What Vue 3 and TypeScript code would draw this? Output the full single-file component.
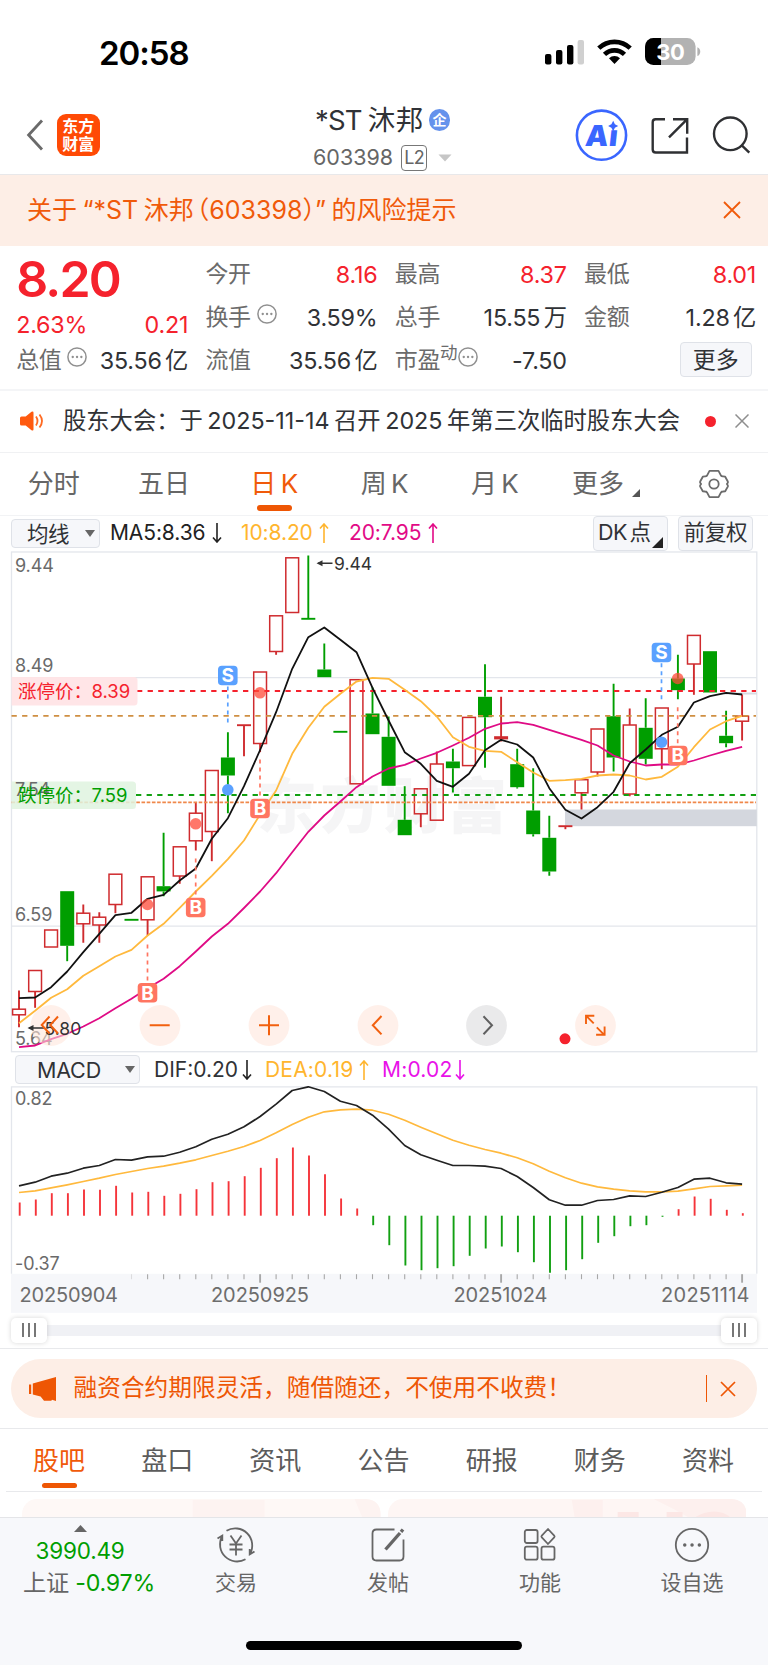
<script setup lang="ts">
type Candle = [high: number, top: number, bottom: number, low: number, up: 0 | 1]

const X0 = 19
const STEP = 16.07
const xAt = (i: number): number => +(X0 + STEP * i).toFixed(1)

const candles: Candle[] = [
  [990, 1008.7, 1014.3, 1026.7, 1], [970, 970, 991, 1007.3, 1], [929.5, 929.5, 946.5, 946.5, 1],
  [890.7, 890.7, 945.3, 960.7, 0], [904, 912.7, 923.3, 942.3, 1], [911.7, 916.7, 924.5, 942.3, 1],
  [873.7, 873.7, 904, 912.7, 1], [918.6, 918.6, 920, 920, 0], [876.3, 876.3, 919.3, 935, 1],
  [832.3, 885.7, 890.9, 895.7, 0], [846.3, 846.3, 875.5, 883.3, 1], [802, 812.7, 840.3, 850, 1],
  [770, 770, 831, 860.7, 1], [731.7, 757, 775, 812.7, 0], [724.7, 724.7, 724.7, 755.7, 1],
  [671.5, 671.5, 743, 751.7, 1], [615.3, 615.3, 651, 654.3, 1], [557.3, 557.3, 612, 612, 1],
  [555, 617.6, 619, 619, 0], [643, 669, 676.7, 676.7, 0], [730.6, 730.6, 732, 732, 0],
  [679.2, 679.2, 783.3, 783.3, 1], [686.7, 713, 733.7, 733.7, 0], [716, 736.3, 785.3, 785.3, 0],
  [785.7, 819.3, 834.7, 834.7, 0], [788.3, 788.3, 813.3, 826.7, 1], [751, 763.5, 819.7, 819.7, 1],
  [748.3, 761, 767.7, 792, 0], [716.9, 716.9, 765.1, 765.1, 1], [663.7, 696.3, 716.7, 767.3, 0],
  [696.3, 736.5, 738.1, 741, 1], [748.3, 763.7, 786.7, 788, 0], [767.7, 810, 833.7, 836, 0],
  [815.3, 837.3, 871, 875.3, 0], [825.7, 825.7, 825.7, 828.7, 1], [779.2, 779.2, 792.3, 809, 1],
  [728.5, 728.5, 771.5, 776, 1], [683.3, 715.7, 757, 771, 0], [708, 724.5, 793.5, 795.7, 1],
  [697.7, 727.3, 758.3, 764, 0], [707.5, 707.5, 748.3, 768.7, 1], [654.3, 678, 689.7, 698.7, 0],
  [634.9, 634.9, 663.5, 694.3, 1], [650.7, 650.7, 692, 692, 0], [710.3, 735.3, 742.7, 746.7, 0],
  [694, 715.7, 720.7, 740, 1],
]

const ma5 = [997.7, 997, 986.7, 971, 951.7, 933.3, 914.7, 912.3, 898.3, 894.3, 880, 868, 838.3, 817.7, 785.7, 749.5, 711.7, 668.3, 636.7, 627, 639.3, 651.7, 687.3, 720, 751.7, 763.3, 780.3, 786.3, 773.3, 749.7, 739.3, 744, 757, 787.7, 809.3, 818, 806.7, 791.3, 762.7, 749, 734.3, 726.3, 702, 695.7, 692.3, 694]
const ma10 = [1022.7, 1010.3, 997.3, 988.7, 975.3, 965.7, 956, 949.3, 935, 923.3, 907.3, 891, 875.3, 858.7, 840, 814, 790, 753.3, 727.3, 706.3, 693.3, 681, 677.3, 678.3, 689.3, 700.7, 716, 736.7, 746.3, 750.3, 751.3, 761.7, 772, 780.3, 779.7, 778.3, 775, 774, 775, 779, 776.3, 766.3, 746.7, 729, 720.7, 715.3]
const ma20 = [1046.7, 1045, 1038.7, 1033.3, 1026, 1017.7, 1007.7, 998.3, 987.7, 978.3, 965.7, 951, 936, 923.3, 907.5, 891, 872.7, 851.7, 831.3, 815, 801, 786.7, 776, 768, 764.3, 758, 752.3, 745, 737.3, 728.3, 723, 721.7, 724.3, 729.3, 734.3, 739.3, 745, 755, 761, 765, 764, 764, 760, 755, 750.3, 746.3]

const sub = (v: number): number => +(1050 + v / 3).toFixed(1)
const dif = [406, 395, 377, 368, 353, 345, 327, 329, 319, 317, 305, 289, 266, 251, 229, 198, 161, 120, 109, 123, 152, 165, 194, 236, 285, 313, 329, 345, 345, 347, 354, 378, 411, 448, 464, 464, 450, 447, 436, 438, 425, 411, 386, 383, 397, 401].map(sub)
const dea = [426, 421, 412, 403, 393, 383, 372, 363, 354, 347, 338, 328, 315, 302, 288, 270, 247, 222, 200, 184, 178, 176, 179, 191, 209, 230, 250, 269, 284, 297, 308, 322, 340, 362, 382, 398, 409, 416, 421, 424, 424, 422, 415, 408, 406, 404].map(sub)
const bars = [456, 447, 428, 428, 417, 418, 406, 426, 424, 436, 430, 416, 395, 392, 377, 352, 323, 291, 315, 371, 444, 474, 524, 584, 645, 659, 653, 647, 616, 594, 588, 605, 635, 667, 659, 626, 577, 557, 527, 524, 499, 476, 438, 445, 478, 488].map(sub)
const ZERO = 1215.2

const line = (ys: number[]): string => ys.map((y, i) => `${xAt(i)},${y}`).join(' ')
const ticks = Array.from({ length: 38 }, (_, k) => k + 8)

interface Signal { kind: 'B' | 'S'; x: number; y: number; from: number; to: number; dot: number }
const signals: Signal[] = [
  { kind: 'S', x: 227.8, y: 675, from: 686, to: 724, dot: 789.3 },
  { kind: 'B', x: 147.5, y: 992.3, from: 944, to: 982, dot: 904 },
  { kind: 'B', x: 195.7, y: 907, from: 858, to: 896, dot: 823.3 },
  { kind: 'B', x: 260, y: 808, from: 759, to: 798, dot: 692.3 },
  { kind: 'S', x: 661.5, y: 652, from: 662.7, to: 701, dot: 741.7 },
  { kind: 'B', x: 677.7, y: 755, from: 706.7, to: 744, dot: 678 },
]
const tone = (k: 'B' | 'S'): string => (k === 'S' ? '#5aa1ff' : '#ff7561')

const periods = ['分时', '五日', '日 K', '周 K', '月 K']
const sections = ['股吧', '盘口', '资讯', '公告', '研报', '财务', '资料']
</script>

<template>
  <div class="page">
    <header class="status">
      <span class="clock">20:58</span>
      <svg class="status-icons" width="160" height="30" viewBox="543 37 160 30">
        <rect x="545" y="54" width="6.4" height="10.4" rx="2" />
        <rect x="556" y="50" width="6.4" height="14.4" rx="2" />
        <rect x="567" y="45" width="6.4" height="19.4" rx="2" />
        <rect x="577.6" y="40" width="6.4" height="24.4" rx="2" fill="#d0d0d0" />
        <g fill="none" stroke="#000" stroke-width="4.6">
          <path d="M598.8 48.2a22.6 22.6 0 0 1 31.4 0" />
          <path d="M604.5 54.4a14.4 14.4 0 0 1 20 0" />
        </g>
        <path d="M609 58.3a8 8 0 0 1 11 0l-5.5 5.7z" />
        <clipPath id="cell"><rect x="645" y="38" width="50.6" height="27" rx="8.5" /></clipPath>
        <g clip-path="url(#cell)">
          <rect x="645" y="38" width="51" height="27" fill="#b2b2b2" />
          <rect x="645" y="38" width="16" height="27" />
        </g>
        <path d="M697.4 47.3c3.800 1.200 3.800 7.600 0 8.800z" fill="#b2b2b2" />
        <text x="670.3" y="60" class="battery" text-anchor="middle">30</text>
      </svg>
    </header>

    <nav class="header">
      <svg class="back" width="20" height="34" viewBox="0 0 20 34"><path d="M17 2.500 3.600 17 17 31.500" fill="none" stroke="#6a6a6a" stroke-width="2.800" /></svg>
      <div class="logo"><span>东方</span><span>财富</span></div>
      <div class="title">
        <div class="name">*ST <span>沐邦</span><i>企</i></div>
        <div class="code">603398<b>L2</b><svg width="14" height="8" viewBox="0 0 14 8"><path d="M.5.500h13L7 7.500z" fill="#c6c6c6" /></svg></div>
      </div>
      <svg class="tools" width="178" height="56" viewBox="574 107 178 56" fill="none">
        <circle cx="601.500" cy="135.200" r="24.600" stroke="#3a66ff" stroke-width="2.600" />
        <g class="ai" fill="#3a66ff" transform="translate(16 0) skewX(-6)">
          <text x="583.800" y="145.600">A</text><text x="607.500" y="145.600">ı</text>
        </g>
        <path d="m613.200 120.800 1.700 3.400 3.300 1.700-3.300 1.800-1.700 3.500-1.800-3.500-3.300-1.800 3.300-1.700z" fill="#3a66ff" />
        <g stroke="#2f3033" stroke-width="2.400">
          <path d="M665 119.200h-9.300q-3 0-3 3v27.300q0 3 3 3h31.300v-15M673 119.200h14.200v14.500M687 119.400l-18 18" />
          <circle cx="730.300" cy="133.800" r="16.300" />
          <path d="m741.500 145.200 7.800 7.500" />
        </g>
      </svg>
    </nav>

    <section class="risk">
      <span>关于 “*ST 沐邦<em>（</em>603398<em>）</em>” 的风险提示</span>
      <svg width="18" height="18" viewBox="0 0 18 18"><path d="m1 1 16 16M17 1 1 17" stroke="#f05a0a" stroke-width="1.800" /></svg>
    </section>

    <section class="quote">
      <div class="col first">
        <div class="price">8.20</div>
        <div class="row red chg"><span>2.63%</span><span>0.21</span></div>
        <div class="row"><span class="lab">总值<svg class="info" viewBox="0 0 20 20"><circle cx="10" cy="10" r="9.100" /><path d="M5.700 10h.1M10 10h.1M14.300 10h.1" /></svg></span><span>35.56 亿</span></div>
      </div>
      <div class="col">
        <div class="row"><span class="lab">今开</span><span class="red">8.16</span></div>
        <div class="row"><span class="lab">换手<svg class="info" viewBox="0 0 20 20"><circle cx="10" cy="10" r="9.100" /><path d="M5.700 10h.1M10 10h.1M14.300 10h.1" /></svg></span><span>3.59%</span></div>
        <div class="row"><span class="lab">流值</span><span>35.56 亿</span></div>
      </div>
      <div class="col">
        <div class="row"><span class="lab">最高</span><span class="red">8.37</span></div>
        <div class="row"><span class="lab">总手</span><span>15.55 万</span></div>
        <div class="row"><span class="lab">市盈<sup>动</sup><svg class="info tight" viewBox="0 0 20 20"><circle cx="10" cy="10" r="9.100" /><path d="M5.700 10h.1M10 10h.1M14.300 10h.1" /></svg></span><span>-7.50</span></div>
      </div>
      <div class="col">
        <div class="row"><span class="lab">最低</span><span class="red">8.01</span></div>
        <div class="row"><span class="lab">金额</span><span>1.28 亿</span></div>
        <div class="row end"><button class="more">更多</button></div>
      </div>
    </section>

    <section class="notice">
      <svg width="24" height="20" viewBox="0 0 24 20"><path d="M1.500 5.500h4.200L11.500.800q2-1 2 1v16.400q0 2-2 1l-5.800-4.700H1.500q-1.500 0-1.500-1.500V7q0-1.500 1.500-1.500z" fill="#ff5a0f" /><path d="M16 5.500q3 4.500 0 9M19.500 3.500q5 6.500 0 13" fill="none" stroke="#ff6a22" stroke-width="1.800" /></svg>
      <span class="msg">股东大会：<i>于 2025-11-14 召开 2025 年第三次临时股东大会</i></span>
      <span class="dot"></span>
      <svg class="x" width="14" height="14" viewBox="0 0 14 14"><path d="m.500.500 13 13M13.500.500l-13 13" stroke="#8e8e8e" stroke-width="1.500" /></svg>
    </section>

    <nav class="periods">
      <span v-for="(p, i) in periods" :key="p" :class="{ on: i === 2 }">{{ p }}</span>
      <span class="wide">更多<svg width="8" height="8" viewBox="0 0 8 8"><path d="M8 0v8H0z" fill="#555" /></svg></span>
      <svg class="gear" width="30" height="30" viewBox="0 0 30 30" fill="none" stroke="#6b6b6b" stroke-width="1.800"><path d="M10.500 1.800h9l2.500 4.800q.7.900 2 .8l2.200.3 2.600 4.800q.3.900-.2 1.600l-.7 1 .7 1q.5.700.2 1.500l-2.600 4.700-2.300.2q-1.300 0-1.900.9l-2.500 4.800h-9L8 23.400q-.6-.9-1.900-.9l-2.300-.200-2.600-4.700q-.3-.8.2-1.500l.7-1-.7-1q-.5-.7-.2-1.600l2.600-4.800L6 7.400q1.300.1 2-.8z" stroke-linejoin="round" /><circle cx="15" cy="15" r="4.700" /></svg>
    </nav>

    <section class="ma-row">
      <button class="pick">均线<i></i></button>
      <span class="v v1">MA5:8.36</span><svg class="arr" viewBox="0 0 10 20" stroke="#222"><path d="M5 0v19M1 14.500l4 4.500 4-4.500" /></svg>
      <span class="v v2">10:8.20</span><svg class="arr" viewBox="0 0 10 20" stroke="#ffb52e"><path d="M5 20V1M1 5.500 5 1l4 4.500" /></svg>
      <span class="v v3">20:7.95</span><svg class="arr" viewBox="0 0 10 20" stroke="#e20a86"><path d="M5 20V1M1 5.500 5 1l4 4.500" /></svg>
      <button class="chip dk">DK 点<svg width="11" height="11" viewBox="0 0 11 11"><path d="M11 0v11H0z" fill="#222" /></svg></button>
      <button class="chip">前复权</button>
    </section>

    <svg class="chart" width="768" height="502" viewBox="0 550.500 768 502">
      <text class="watermark" x="257" y="827" textLength="250">东方财富</text>
      <g fill="none" stroke="#e3e6ec" stroke-width="1.300">
        <path d="M11.500 677.200H757M11.500 925.700H757" />
        <rect x="11.500" y="551.500" width="745.300" height="499.700" />
      </g>
      <path d="M724 693H757" stroke="#d9dbe2" stroke-width="2" />
      <rect x="565" y="809" width="191.800" height="16.700" fill="#d4d7de" />
      <g class="axis">
        <text x="15" y="571.200">9.44</text><text x="15" y="671.500">8.49</text><text x="15" y="920.700">6.59</text><text x="15" y="1044.500">5.64</text>
      </g>

      <g v-for="(c, i) in candles" :key="i" :stroke="c[4] ? '#cf2b2e' : '#009e00'" stroke-width="1.900">
        <path :d="`M${xAt(i)} ${c[0]}V${c[1]}M${xAt(i)} ${c[2]}V${c[3]}`" />
        <path v-if="c[2] - c[1] < 2" :d="`M${xAt(i) - 7} ${(c[1] + c[2]) / 2}h14`" :stroke-width="c[2] - c[1] > 1.5 ? 3.2 : 1.9" />
        <rect v-else-if="c[4]" :x="xAt(i) - 6.4" :y="c[1]" width="12.800" :height="c[2] - c[1]" fill="none" stroke-width="1.500" />
        <rect v-else :x="xAt(i) - 7" :y="c[1]" width="14" :height="c[2] - c[1]" fill="#009e00" stroke="none" />
      </g>

      <g fill="none" stroke-width="1.800">
        <path d="M137 690.500H756" stroke="#f5222d" stroke-dasharray="5.300 5.300" />
        <path d="M11.500 715.400H756" stroke="#cf8f42" stroke-dasharray="5.300 5.300" />
        <path d="M136 794.500H756" stroke="#12a012" stroke-dasharray="5.300 5.300" />
        <path d="M11.500 801.800H756" stroke="#f0884a" stroke-dasharray="3.600 1.600" />
      </g>
      <path d="M11.500 676.500h122.500q3.500 0 3.500 3.500v21.500q0 3.500-3.500 3.500H11.500z" fill="#ffe4e6" fill-opacity=".95" />
      <text class="limit" x="18" y="697.500" fill="#f5222d">涨停价：<tspan x="91.500">8.39</tspan></text>
      <path d="M11.500 781h121q3.500 0 3.500 3.500v20.500q0 3.500-3.500 3.500h-121z" fill="#dff3df" fill-opacity=".85" />
      <g class="axis"><text x="15" y="795.800">7.54</text></g>
      <text class="limit" x="18" y="801.500" fill="#009e00">跌停价：<tspan x="91.500">7.59</tspan></text>

      <g fill="none" stroke-width="1.800" stroke-linejoin="round">
        <polyline :points="line(ma20)" stroke="#df0b85" />
        <polyline :points="line(ma10)" stroke="#ffb93d" />
        <polyline :points="line(ma5)" stroke="#111" />
      </g>

      <g v-for="s in signals" :key="s.x">
        <path :d="`M${s.x} ${s.from}V${s.to}`" :stroke="tone(s.kind)" stroke-width="1.700" stroke-dasharray="4 4" />
        <circle :cx="s.x" :cy="s.dot" r="5.800" :fill="s.kind === 'S' ? '#5aa1ff' : '#ff4a38'" :fill-opacity="s.kind === 'S' ? 1 : 0.75" />
        <rect :x="s.x - 9.8" :y="s.y - 9.8" width="19.600" height="19.600" rx="3.800" :fill="tone(s.kind)" />
        <text class="tag" :x="s.x" :y="s.y + 6.8" text-anchor="middle">{{ s.kind }}</text>
      </g>

      <g fill="#ffe6da" fill-opacity=".58">
        <circle cx="51" cy="1025" r="20.400" /><circle cx="160" cy="1025" r="20.400" /><circle cx="269" cy="1025" r="20.400" /><circle cx="378" cy="1025" r="20.400" /><circle cx="595.500" cy="1025" r="20.400" />
        <circle cx="486.500" cy="1025" r="20.400" fill="#e8e8e9" fill-opacity=".9" />
      </g>
      <g class="mark">
        <path d="M318 562.700h14.500M29 1027.500h16" stroke="#333" stroke-width="1.500" />
        <path d="M316.500 562.700l6-3v6zM27.500 1027.500l6-3v6z" />
        <text x="334" y="569">9.44</text><text x="44.500" y="1034.200">5.80</text>
      </g>
      <g fill="none" stroke="#f2600f" stroke-width="2">
        <path d="m49.500 1016-7.800 8.500 7.800 8.500M58 1016l-7.800 8.500 7.800 8.500" />
        <path d="M149.700 1024.700h20M259 1024.700h20M269 1014.700v20M381.500 1015.500l-8.700 9.200 8.700 9.200" />
        <path d="M586 1023.500v-8.300h8.300M586.200 1015.400l7.500 7.500M596.800 1026.800l7.500 7.500M604.600 1026v8.300h-8.500" stroke-width="1.900" />
        <path d="m483.500 1015.800 8.500 9-8.500 9" stroke="#606060" />
      </g>
      <circle cx="565" cy="1038.300" r="5.500" fill="#f5222d" />
    </svg>

    <section class="ma-row macd">
      <button class="pick">MACD<i></i></button>
      <span class="v m1">DIF:0.20</span><svg class="arr" viewBox="0 0 10 20" stroke="#222"><path d="M5 0v19M1 14.500l4 4.500 4-4.500" /></svg>
      <span class="v m2">DEA:0.19</span><svg class="arr" viewBox="0 0 10 20" stroke="#ffb52e"><path d="M5 20V1M1 5.500 5 1l4 4.500" /></svg>
      <span class="v m3">M:0.02</span><svg class="arr" viewBox="0 0 10 20" stroke="#e812e8"><path d="M5 0v19M1 14.500l4 4.500 4-4.500" /></svg>
    </section>

    <svg class="chart" width="768" height="227" viewBox="0 1085.500 768 227">
      <rect x="11" y="1273.300" width="746" height="39" fill="#f6f7fa" />
      <path d="M11.500 1273.300V1086.400H756.800V1273.300" fill="none" stroke="#e3e6ec" stroke-width="1.300" />
      <g class="axis"><text x="15" y="1104">0.82</text><text x="15" y="1269.700">-0.37</text></g>
      <path v-for="(b, i) in bars" :key="i" :d="`M${xAt(i) + 0.7} ${ZERO}V${b}`" :stroke="b < ZERO ? '#f5343a' : '#12a012'" stroke-width="1.900" />
      <g fill="none" stroke-width="1.700" stroke-linejoin="round">
        <polyline :points="line(dea)" stroke="#ffb93d" />
        <polyline :points="line(dif)" stroke="#222" />
      </g>
      <path d="M131.500 1273.700v5" stroke="#dcdcde" stroke-width="1.100" />
      <path v-for="t in ticks" :key="t" :d="`M${xAt(t)} 1273.700v${t % 15 ? 5 : 8.5}`" stroke="#a8a8a8" :stroke-width="t % 15 ? 1.1 : 1.9" />
      <g class="dates">
        <text x="19.500" y="1301.700" textLength="98.500">20250904</text><text x="211" y="1301.700" textLength="98">20250925</text><text x="453.500" y="1301.700" textLength="94">20251024</text><text x="661" y="1301.700" textLength="88.500">20251114</text>
      </g>
    </svg>

    <section class="slider">
      <div class="track"><span><i></i><i></i><i></i></span><span><i></i><i></i><i></i></span></div>
    </section>

    <section class="promo">
      <div class="pill">
        <svg width="27" height="24" viewBox="0 0 27 24" fill="#ee5604"><path d="M0 7.500h2.200v9.500H0zM3.800 6.500 27 0v24l-4-1.300-.7 1H15l-3.400-4.200-7.800-2z" /></svg>
        <span>融资合约期限灵活，随借随还，不使用不收费！</span>
        <b></b>
        <svg width="16" height="16" viewBox="0 0 16 16"><path d="m1 1 14 14M15 1 1 15" stroke="#ee5604" stroke-width="1.700" /></svg>
      </div>
    </section>

    <nav class="sections">
      <span v-for="(s, i) in sections" :key="s" :class="{ on: i === 0 }">{{ s }}</span>
    </nav>
    <div class="cards">
      <svg width="359" height="19" viewBox="0 0 359 19"><rect width="359" height="40" rx="15" fill="#fef8f6" /><path d="M171 1h72v18h-72zM333 0h11q15 1 15 15v4h-18z" fill="#fdf3f1" /></svg>
      <svg width="359" height="19" viewBox="0 0 359 19"><rect width="359" height="40" rx="15" fill="#fef6f4" /><path d="M184 1h31v18h-28zM266 0h78q15 1 15 15v4H302l-16-9z" fill="#fdf0ee" /><path d="M230 13h21v6h-21zM279 13h16v6h-16zM306 19q22-13 38 0z" fill="#fce7e5" /></svg>
    </div>

    <footer class="nav">
      <div class="items">
        <div class="index">
          <svg width="13" height="7" viewBox="0 0 13 7"><path d="M6.500 0 13 7H0z" fill="#666" /></svg>
          <strong>3990.49</strong>
          <span>上证 <b>-0.97%</b></span>
        </div>
        <div class="item">
          <svg viewBox="0 0 40 40"><path d="M10.500 5.800a17 17 0 0 1 23.500 23M29.500 34.200A17 17 0 0 1 6 11.500M1.500 13.500 6.300 10.500v5.500M38.500 26.500l-4.800 3v-5.500M14.500 10.500l5.500 8 5.500-8M20 18.500v12M13.500 19.500h13M13.500 24.500h13" /></svg><span>交易</span>
        </div>
        <div class="item">
          <svg viewBox="0 0 40 40"><path d="M26.500 4.500H8.500q-4 0-4 4v23q0 4 4 4h23q4 0 4-4v-17" /><path d="M17.500 24.500 32 8" stroke-width="3.400" /><path d="m33 6.800 2-2.300" stroke-width="3.400" /></svg><span>发帖</span>
        </div>
        <div class="item">
          <svg viewBox="0 0 40 40"><rect x="4.800" y="5" width="12.800" height="13" rx="2" /><rect x="4.800" y="21.700" width="12.800" height="13" rx="2" /><rect x="21.500" y="21.700" width="13" height="13" rx="2" /><path d="m28 4 6.200 6.600q.8.900 0 1.800L28 19l-6.200-6.600q-.8-.9 0-1.800z" stroke-linejoin="round" /></svg><span>功能</span>
        </div>
        <div class="item">
          <svg viewBox="0 0 40 40"><circle cx="20" cy="20" r="16.200" /><path d="M12.700 20h.1M20 20h.1M27.300 20h.1" stroke-width="3.400" stroke-linecap="round" /></svg><span>设自选</span>
        </div>
      </div>
      <div class="home"></div>
    </footer>
  </div>
</template>

<style>
body { margin: 0; background: #fff; }
</style>

<style scoped>
.page { width: 768px; height: 1665px; overflow: hidden; background: #fff; color: #303236; font-family: Inter, "Noto Sans CJK SC", sans-serif; font-weight: 400; line-height: 1.2; display: flex; flex-direction: column; }
.page > * { flex: none; box-sizing: border-box; }
button { font: inherit; color: inherit; padding: 0; margin: 0; box-sizing: border-box; background: #f6f7fa; border: 1.500px solid #dfe2e8; border-radius: 4px; white-space: nowrap; }
i, em { font-style: normal; }
svg { display: block; }

.status { height: 95px; display: flex; justify-content: space-between; padding: 37px 65px 0 99px; }
.clock { font-size: 33px; font-weight: 600; line-height: 32px; color: #000; letter-spacing: -1px; }
.battery { font-size: 22px; font-weight: 700; fill: #fff; letter-spacing: -.5px; }

.header { height: 80px; border-bottom: 1px solid #e8e8ea; display: grid; grid-template-columns: 57px 43px 1fr 178px; padding-right: 16px; }
.back { margin: 23px 0 0 25px; }
.logo { width: 42.500px; height: 42.500px; margin-top: 18.500px; border-radius: 9px; background: #ff4a05; color: #fff; font-size: 16px; font-weight: 700; line-height: 18px; display: flex; flex-direction: column; align-items: center; justify-content: center; }
.tools { margin-top: 12px; }
.ai { font-size: 29px; font-weight: 900; }
.title { padding-left: 213px; white-space: nowrap; }
.name { display: flex; align-items: center; height: 36px; margin: 7px 0 0 2px; font-size: 27.500px; letter-spacing: -.8px; }
.name span { margin-left: 6px; letter-spacing: .5px; }
.name i { width: 21.500px; height: 21.500px; margin-left: 5px; border-radius: 50%; background: #6592ec; color: #fff; font-size: 14px; font-weight: 700; line-height: 21px; text-align: center; letter-spacing: 0; }
.code { display: flex; align-items: center; height: 30px; margin-top: 4.500px; font-size: 21.500px; color: #666; }
.code b { box-sizing: border-box; width: 26px; height: 26px; margin: 0 11px 0 8px; border: 1.300px solid #777; border-radius: 4px; font-weight: 400; font-size: 18px; line-height: 24px; text-align: center; letter-spacing: -.8px; }

.risk { height: 70.500px; background: #fdeee6; color: #f05a0a; font-size: 25px; display: flex; align-items: center; justify-content: space-between; padding: 0 27px; white-space: nowrap; word-spacing: -1.500px; }
.risk em { font-feature-settings: "halt"; margin-left: 3px; }
.risk em + em { margin-left: 0; }

.quote { height: 145px; display: grid; grid-template-columns: repeat(4, 172px); column-gap: 17.300px; padding: 8px 0 0 16.200px; border-bottom: 2px solid #f4f5f7; font-size: 23.300px; letter-spacing: -.2px; white-space: nowrap; }
.row { height: 43px; display: flex; align-items: center; justify-content: space-between; word-spacing: -3px; }
.lab { color: #6b6b6b; display: flex; align-items: center; font-size: 23px; letter-spacing: -.4px; }
.red { color: #f5222d; }
.price { height: 52px; font-size: 50px; font-weight: 600; line-height: 50px; color: #f5222d; letter-spacing: -1.800px; }
.chg { height: 34px; padding-top: 5px; box-sizing: border-box; }
.info { width: 20px; height: 20px; margin: -9px 0 0 6px; fill: none; stroke: #909090; stroke-width: 1.500; }
.info path { stroke-width: 2.300; stroke-linecap: round; }
.info.tight { margin-left: 1px; }
.lab sup { font-size: 17.500px; line-height: 18px; margin-top: -16px; }
.end { justify-content: flex-end; }
.more { width: 72.500px; height: 35px; margin: -3px 4px 0 0; font-size: 23px; line-height: 30px; }

.notice { height: 62px; border-bottom: 1.500px solid #f0f1f3; display: flex; align-items: center; padding-left: 20px; font-size: 23.300px; white-space: nowrap; }
.msg { margin-left: 19px; width: 616px; word-spacing: -2px; letter-spacing: 0; }
.dot { width: 11px; height: 11px; border-radius: 50%; background: #f5222d; margin-left: 26px; }
.x { margin-left: 19px; }

.periods { height: 63px; padding-right: 0; display: flex; border-bottom: 1.500px solid #f2f3f5; color: #666; font-size: 26px; line-height: 62px; white-space: nowrap; word-spacing: -3px; }
.periods span { width: 110.300px; text-align: center; }
.periods span:first-child { margin-left: -1.500px; }
.periods span.on, .sections span.on { color: #f05a0a; position: relative; }
.on::after { content: ""; position: absolute; left: 50%; bottom: 4px; width: 35px; height: 5.500px; margin-left: -17.500px; border-radius: 3px; background: #ee5604; }
.periods .wide { width: 86px; margin-left: 13px; display: flex; align-items: center; justify-content: center; gap: 8px; }
.wide svg { margin-top: 18px; }
.gear { margin: 16px 0 0 50px; }

.ma-row { height: 35px; display: flex; align-items: center; padding-left: 11px; font-size: 21px; letter-spacing: -.1px; white-space: nowrap; }
.pick { width: 89px; height: 29px; margin-top: 1px; display: flex; align-items: center; justify-content: space-between; padding: 0 4px 0 15px; font-size: 21.500px; line-height: 24px; letter-spacing: -.5px; }
.pick i { border: 5px solid transparent; border-top: 7.500px solid #666; border-bottom: 0; }
.arr { width: 10px; height: 20px; margin-left: 5px; fill: none; stroke-width: 1.600; }
.v { margin-left: 10px; width: 97px; }
.v1 { color: #222; }
.v2 { margin-left: 19px; width: 73px; color: #ffb52e; }
.v3 { margin-left: 20px; width: 74px; color: #e20a86; }
.chip { width: 75px; height: 35px; font-size: 21.500px; margin-left: 10px; letter-spacing: -.3px; }
.dk { position: relative; margin-left: 155px; text-align: left; padding-left: 4px; word-spacing: -3px; letter-spacing: -.5px; }
.dk svg { position: absolute; right: 4px; bottom: 2px; }
.macd { padding: 3px 0 0 15px; letter-spacing: 0; }
.macd .pick { width: 125px; padding-left: 21px; margin-top: 0; letter-spacing: -.2px; }
.macd .m1 { width: 83px; margin-left: 14px; }
.macd .m2 { width: 89px; margin-left: 13px; color: #ffb52e; letter-spacing: .2px; }
.macd .m3 { width: 68px; margin-left: 13px; color: #e812e8; letter-spacing: .2px; }

.chart { display: block; }
.chart + .ma-row { margin-top: -2px; }
.axis text { font-size: 18px; fill: #6a6a6a; letter-spacing: -.1px; }
.limit { font-size: 18.500px; }
.tag { font-size: 19px; font-weight: 700; fill: #fff; }
.mark { fill: #333; }
.mark text { font-size: 17.500px; stroke: none; }
.watermark { font-size: 60px; font-weight: 900; fill: #f5f5f6; }
.dates text { font-size: 20px; fill: #6d6d6d; }

.slider { height: 36px; border-bottom: 1.500px solid #e8e9ec; padding: 12.500px 11px 0; }
.track { height: 10.500px; background: #f0f1f5; display: flex; justify-content: space-between; align-items: center; }
.track span { width: 36px; height: 25px; border-radius: 5px; background: #fff; box-shadow: 0 0 5px rgba(0, 0, 0, .16); display: flex; justify-content: center; align-items: center; gap: 4px; }
.track i { width: 1.700px; height: 14px; background: #777; }

.promo { height: 80px; border-bottom: 1.500px solid #e8e9ec; padding: 10.500px 11px 0; }
.pill { height: 59px; border-radius: 30px; background: #fdeee6; color: #ee5604; display: flex; align-items: center; padding-left: 17.500px; font-size: 23.700px; white-space: nowrap; }
.pill span { margin-left: 18px; width: 632px; }
.pill b { width: 1.500px; height: 27px; background: #ee5604; margin-right: 13px; }

.sections { height: 63px; margin: 0 6px; display: flex; border-bottom: 1.500px solid #e8e9ec; font-size: 26px; line-height: 63px; color: #5c5c5c; }
.sections span { width: 108.150px; text-align: center; }
.sections span:first-child { margin-left: -1px; }
.sections span.on::after { bottom: 2.500px; }
.cards { height: 25.500px; padding: 7.500px 22px 0; display: flex; gap: 7px; }

.nav { flex: 1 0 auto !important; background: #f7f8fb; border-top: 1.500px solid #e4e5e8; color: #666; }
.items { display: flex; }
.index { width: 160px; padding-top: 7px; display: flex; flex-direction: column; align-items: center; font-size: 22.500px; letter-spacing: -.2px; white-space: nowrap; }
.index strong { font-weight: 400; color: #009e00; line-height: 32px; margin-top: 3px; }
.index span { line-height: 32px; margin-left: 18px; font-size: 23.200px; }
.index svg { margin-left: 1px; }
.index b { font-weight: 400; color: #009e00; }
.item { width: 152px; padding-top: 6.500px; display: flex; flex-direction: column; align-items: center; font-size: 21px; }
.item svg { width: 40px; height: 40px; fill: none; stroke: #666; stroke-width: 1.800; }
.item span { line-height: 32px; margin-top: 2px; }
.home { width: 276px; height: 9px; border-radius: 5px; background: #000; margin: 41.500px auto 0; }
</style>
